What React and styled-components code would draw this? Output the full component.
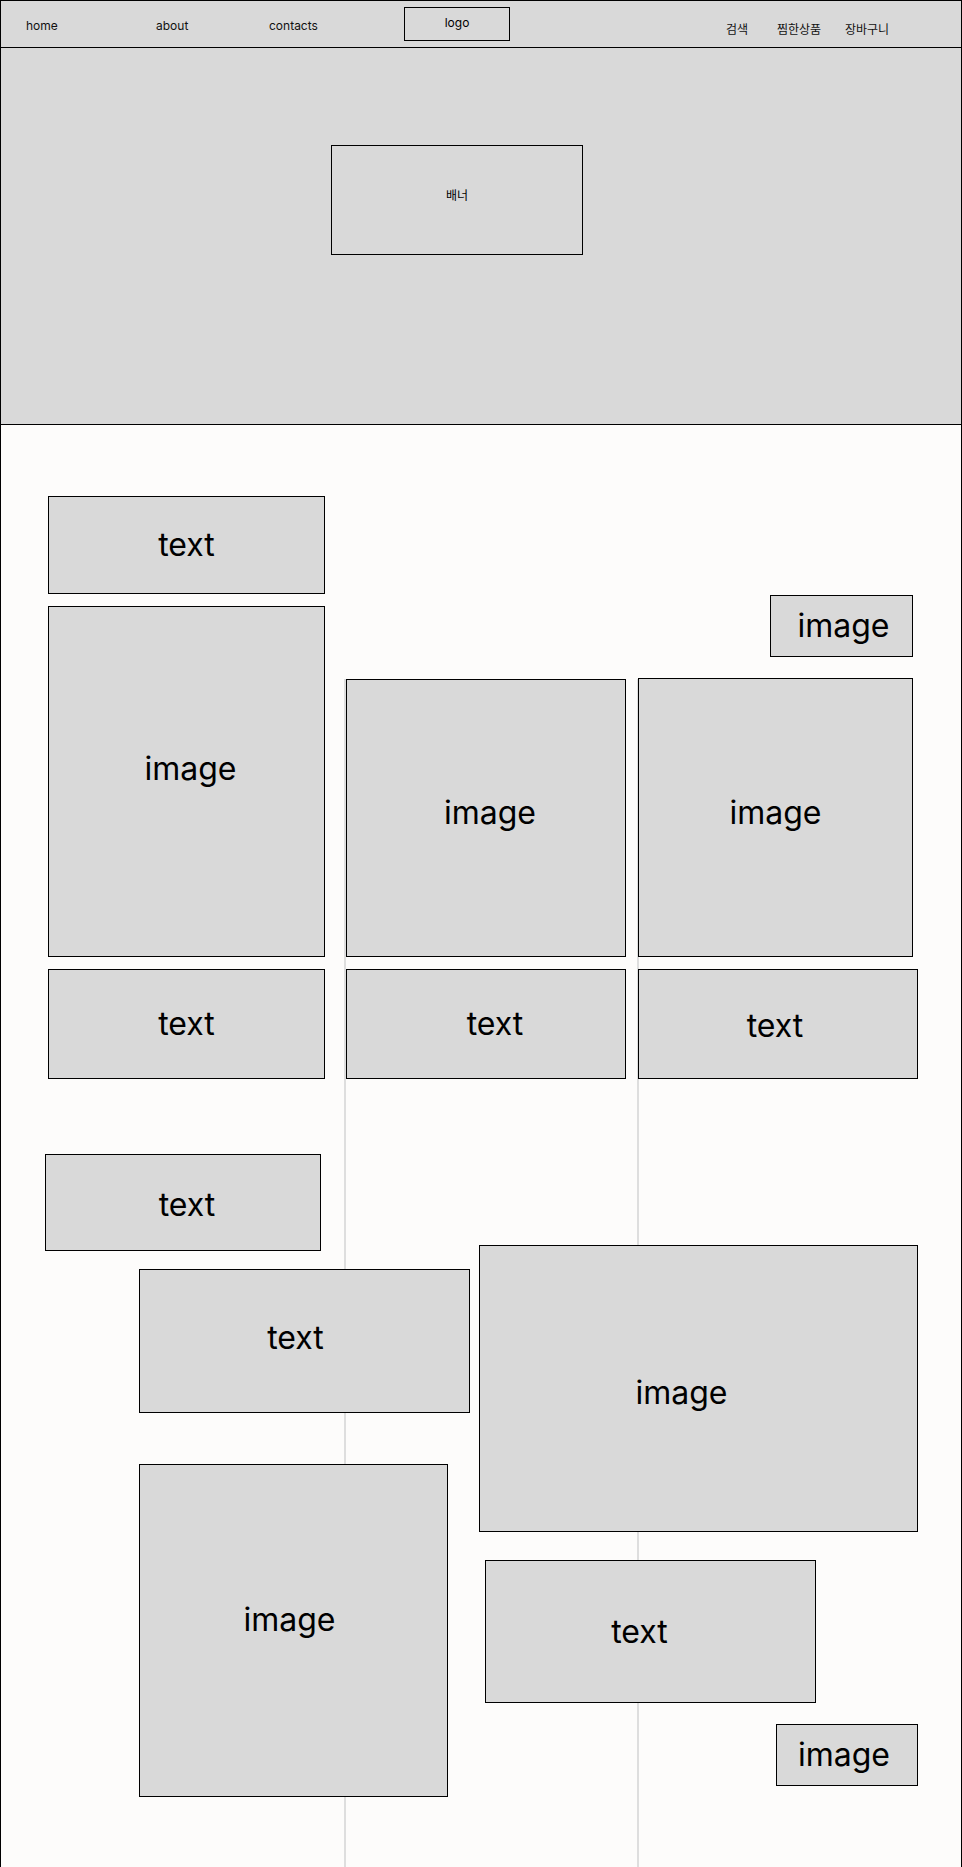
import React from "react";
import styled, { createGlobalStyle } from "styled-components";

const GlobalStyle = createGlobalStyle`
  body {
    margin: 0;
    background: #ffffff;
    font-family: Inter, "Noto Sans CJK KR", sans-serif;
    color: #000;
  }
`;

const Frame = styled.div`
  width: 962px;
  box-sizing: border-box;
  border: 1px solid #000;
  border-bottom: none;
`;

const Header = styled.header`
  height: 47px;
  box-sizing: border-box;
  border-bottom: 1px solid #000;
  background: #d9d9d9;
  display: flex;
  align-items: flex-start;
  padding-left: 25px;
`;

const NavItem = styled.a`
  width: ${p => p.$w || 100}px;
  padding-top: ${p => (p.$low ? 21 : 17)}px;
  font-size: 12px;
  line-height: 15px;
  color: #111;
  text-decoration: none;
  flex-shrink: 0;
`;

const LogoBox = styled.div`
  width: 106px;
  height: 34px;
  margin-top: 6px;
  box-sizing: border-box;
  border: 1px solid #000;
  display: flex;
  justify-content: center;
  padding-top: 8px;
  font-size: 12px;
  line-height: 14px;
  flex-shrink: 0;
`;

const RightNav = styled.nav`
  display: flex;
  margin-left: 216px;
`;

const Banner = styled.section`
  height: 377px;
  box-sizing: border-box;
  border-bottom: 1px solid #000;
  background: #d9d9d9;
  padding: 97px 0 0 330px;
`;

const BannerBox = styled.div`
  width: 252px;
  height: 110px;
  box-sizing: border-box;
  border: 1px solid #000;
  display: flex;
  align-items: center;
  justify-content: center;
  font-size: 12px;
  padding-bottom: 12px;
`;

const Content = styled.main`
  position: relative;
  background: #fdfcfb;
  min-height: 1442px;
  box-sizing: border-box;
  padding-top: 71px;
`;

const Guide = styled.div`
  position: absolute;
  top: 254px;
  bottom: 0;
  left: ${p => p.$x}px;
  width: 2px;
  background: #dedede;
`;

const Row = styled.div`
  display: flex;
  align-items: ${p => p.$align || "flex-start"};
  margin-top: ${p => p.$mt || 0}px;
`;

const Column = styled.div`
  display: flex;
  flex-direction: column;
  width: ${p => p.$w}px;
  margin-left: ${p => p.$ml || 0}px;
  margin-top: ${p => p.$mt || 0}px;
  gap: ${p => p.$gap || 0}px;
  flex-shrink: 0;
`;

const Card = styled.div`
  position: relative;
  z-index: 1;
  box-sizing: border-box;
  width: ${p => p.$w}px;
  height: ${p => p.$h}px;
  margin-left: ${p => p.$ml || 0}px;
  margin-top: ${p => p.$mt || 0}px;
  align-self: ${p => (p.$end ? "flex-end" : "flex-start")};
  margin-right: ${p => p.$mr || 0}px;
  background: #d9d9d9;
  border: 1px solid #000;
  display: flex;
  align-items: center;
  justify-content: center;
  flex-shrink: 0;
`;

const Label = styled.span`
  font-size: 32px;
  line-height: 1;
  color: #000;
  transform: translate(${p => p.$dx || 0}px, ${p => p.$dy || 0}px);
`;

const Block = ({ label, dx, dy, ...rest }) => (
  <Card {...rest}>
    <Label $dx={dx} $dy={dy}>{label}</Label>
  </Card>
);

export default function App() {
  return (
    <>
      <GlobalStyle />
      <Frame>
        <Header>
          <NavItem $w={130}>home</NavItem>
          <NavItem $w={113}>about</NavItem>
          <NavItem $w={135}>contacts</NavItem>
          <LogoBox>logo</LogoBox>
          <RightNav>
            <NavItem $w={51} $low>검색</NavItem>
            <NavItem $w={68} $low>찜한상품</NavItem>
            <NavItem $w={60} $low>장바구니</NavItem>
          </RightNav>
        </Header>

        <Banner>
          <BannerBox>배너</BannerBox>
        </Banner>

        <Content>
          <Guide $x={343} />
          <Guide $x={636} />

          <Row $align="flex-end">
            <Column $w={277} $ml={47} $gap={12}>
              <Block label="text" $w={277} $h={98} />
              <Block label="image" $w={277} $h={351} dx={4} dy={-13} />
              <Block label="text" $w={277} $h={110} />
            </Column>
            <Column $w={280} $ml={21} $gap={12}>
              <Block label="image" $w={280} $h={278} dx={4} dy={-5} />
              <Block label="text" $w={280} $h={110} dx={9} />
            </Column>
            <Column $w={280} $ml={12} $gap={12}>
              <Block label="image" $w={143} $h={62} $end $mr={5} dx={2} />
              <Block label="image" $w={275} $h={279} $mt={9} dy={-5} />
              <Block label="text" $w={280} $h={110} dx={-3} dy={2} />
            </Column>
          </Row>

          <Row $mt={75}>
            <Column $w={425} $ml={44}>
              <Block label="text" $w={276} $h={97} dx={4} dy={2} />
              <Block label="text" $w={331} $h={144} $ml={94} $mt={18} dx={-9} dy={-3} />
              <Block label="image" $w={309} $h={333} $ml={94} $mt={51} dx={-4} dy={-11} />
            </Column>
            <Column $w={439} $ml={9} $mt={91}>
              <Block label="image" $w={439} $h={287} dx={-17} dy={4} />
              <Block label="text" $w={331} $h={143} $ml={6} $mt={28} dx={-11} />
              <Block label="image" $w={142} $h={62} $end $mt={21} dx={-3} />
            </Column>
          </Row>
        </Content>
      </Frame>
    </>
  );
}
